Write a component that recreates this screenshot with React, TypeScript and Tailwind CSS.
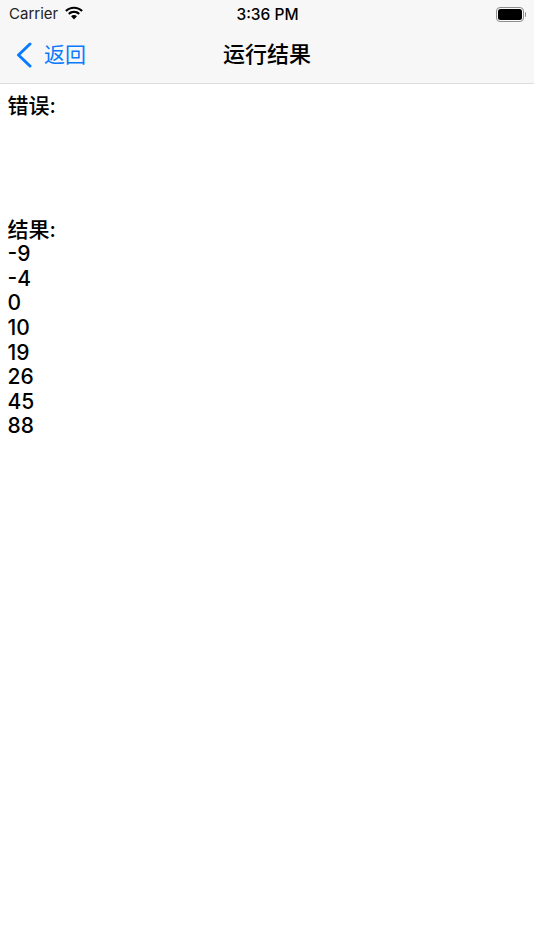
import React from 'react';

const FONT = 'font-["Inter","Noto_Sans_CJK_SC",sans-serif]';
const results = ['-9', '-4', '0', '10', '19', '26', '45', '88'];

const WifiIcon = () => (
  <svg width="20" height="15" viewBox="0 0 19 14" className="-mt-[3px] block">
    <path d="M9.5 2.6c2.7 0 5.1 1 7 2.8l1.4-1.5C15.7 1.800 12.700.500 9.500.500S3.300 1.800 1.100 3.900l1.400 1.500c1.900-1.800 4.300-2.800 7-2.800z" fill="#000" />
    <path d="M9.500 6.600c1.600 0 3 .6 4.200 1.600l1.400-1.500C13.600 5.300 11.600 4.500 9.500 4.500s-4.100.8-5.600 2.200l1.400 1.500c1.200-1 2.600-1.600 4.200-1.600z" fill="#000" />
    <path d="M9.500 8.500c-1.100 0-2.100.4-2.800 1.100l2.800 3 2.800-3c-.7-.7-1.700-1.100-2.800-1.100z" fill="#000" />
  </svg>
);

const BatteryIcon = () => (
  <div className="flex items-center">
    <div className="h-[15px] w-[28px] rounded-[4px] border-[1.5px] border-[#8e8e8e] p-[1px]">
      <div className="h-full w-full rounded-[2.5px] bg-black" />
    </div>
    <div className="ml-[1px] h-[5px] w-[1.5px] rounded-r-sm bg-[#8e8e8e]" />
  </div>
);

const BackChevron = () => (
  <svg width="16" height="26" viewBox="0 0 16 26" className="block">
    <path d="M14 2 2.500 13 14 24" fill="none" stroke="#0a7aff" strokeWidth="3" strokeLinecap="round" strokeLinejoin="round" />
  </svg>
);

export default function App() {
  return (
    <div className={`flex h-[950px] w-[534px] flex-col bg-white text-black ${FONT}`}>
      <div className="border-b border-[#dcdcdc] bg-[#f7f7f7]">
        <div className="flex h-[28px] items-center justify-between pl-[9px] pr-[8px] pt-[1px]">
          <div className="flex w-[180px] items-center gap-[6px] text-[15px] text-[#222]">
            <span>Carrier</span>
            <WifiIcon />
          </div>
          <span className="text-[15.500px] font-medium">3:36 PM</span>
          <div className="flex w-[180px] justify-end">
            <BatteryIcon />
          </div>
        </div>
        <div className="flex h-[55px] items-center justify-between pb-[2px] pl-[16px]">
          <div className="flex w-[100px] items-center gap-[12px] text-[21px] text-[#0a7aff]">
            <BackChevron />
            <span>返回</span>
          </div>
          <span className="text-[22px] font-medium">运行结果</span>
          <div className="w-[116px]" />
        </div>
      </div>
      <div className="flex flex-col px-[7.500px] pt-[10px] text-[21px] font-medium leading-[24.600px]">
        <div>错误:</div>
        <div className="h-[99px]" />
        <div>结果:</div>
        {results.map(value => (
          <div key={value}>{value}</div>
        ))}
      </div>
    </div>
  );
}
